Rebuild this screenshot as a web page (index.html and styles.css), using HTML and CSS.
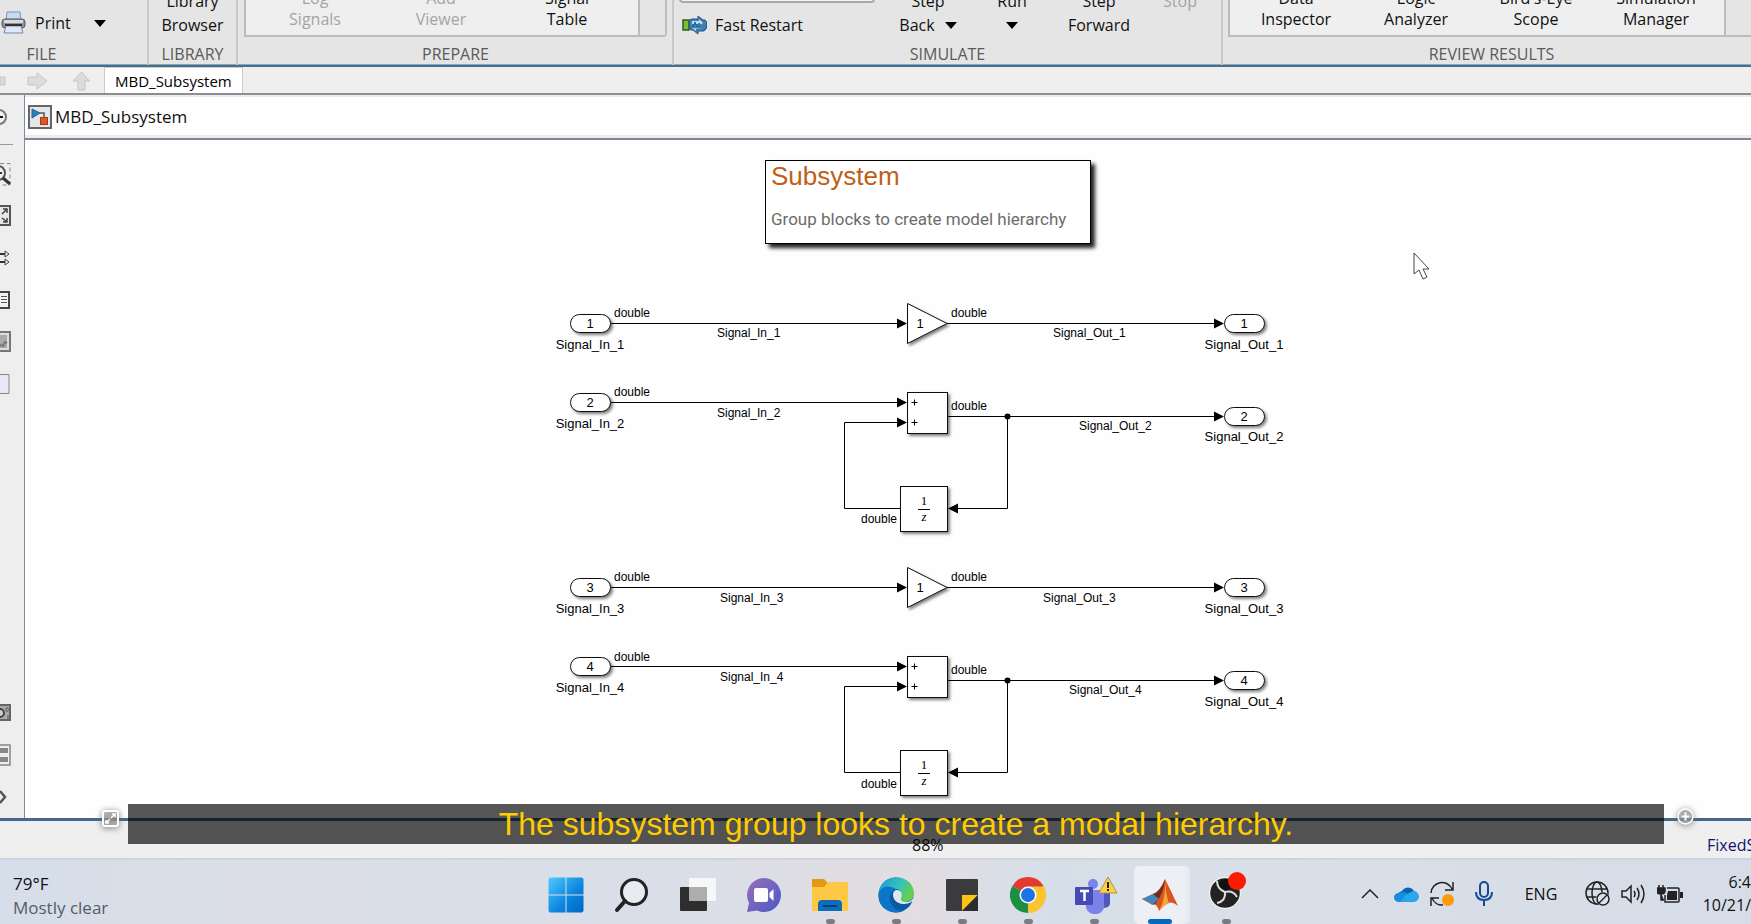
FILE: index.html
```html
<!DOCTYPE html>
<html lang="en">
<head>
<meta charset="utf-8">
<title>MBD_Subsystem</title>
<link rel="stylesheet" href="styles.css">
</head>
<body>
<div class="app">
  <header class="ribbon">
    <section class="section file">
      <div class="tools">
        <button class="tool inline print">
          <svg width="25" height="24" viewBox="0 0 25 24"><path d="M6 1h13l1 9H5z" fill="#c5dcf3" stroke="#7d93ad"/><rect x="1" y="8" width="23" height="9" rx="3" fill="#8f9399" stroke="#54575c"/><rect x="3" y="9" width="19" height="3" fill="#d8dade"/><path d="M5 15h15l2 7H3z" fill="#dbe9fa" stroke="#7288a8"/><path d="M4 14h17" stroke="#333" stroke-width="2"/></svg>
          <span>Print</span>
          <svg class="print-caret" width="12" height="7"><path d="M0 0h12L6 7z"/></svg>
        </button>
      </div>
      <h2>FILE</h2>
    </section>
    <section class="section library">
      <div class="tools"><button class="tool"><span>Library</span><span>Browser</span></button></div>
      <h2>LIBRARY</h2>
    </section>
    <section class="section prepare">
      <div class="gallery">
        <button class="tool" disabled><span>Log</span><span>Signals</span></button>
        <button class="tool" disabled><span>Add</span><span>Viewer</span></button>
        <button class="tool"><span>Signal</span><span>Table</span></button>
        <div class="more"></div>
      </div>
      <h2>PREPARE</h2>
    </section>
    <section class="section simulate">
      <div class="tools">
        <div class="restart">
          <input class="mode" aria-label="Simulation mode">
          <button class="tool inline">
            <svg width="25" height="20" viewBox="0 0 25 20"><rect x="1" y="5" width="6" height="10" fill="#79bf35" stroke="#2c5b23" stroke-width="1.5"/><path d="M9 4h7V1l5 4h2q2 1 2 5t-3 6h-6v3l-5-4H9q-2-2-2-6t2-5z" fill="#3e7fb5" stroke="#24567f"/><path d="M10 6h7V4l4 4-4 3V9h-7zM20 14h-6v2l-4-3" fill="#bcdcf3"/><path d="M11 12l2-5 2 5M17 12V8l2 3" fill="none" stroke="#24567f"/></svg>
            <span>Fast Restart</span>
          </button>
        </div>
        <button class="tool back"><span>Step</span><span>Back <svg width="12" height="7"><path d="M0 0h12L6 7z"/></svg></span></button>
        <button class="tool run"><span>Run</span><span><svg width="12" height="7"><path d="M0 0h12L6 7z"/></svg></span></button>
        <button class="tool forward"><span>Step</span><span>Forward</span></button>
        <button class="tool stop" disabled><span>Stop</span><span>&nbsp;</span></button>
      </div>
      <h2>SIMULATE</h2>
    </section>
    <section class="section review">
      <div class="gallery">
        <button class="tool"><span>Data</span><span>Inspector</span></button>
        <button class="tool"><span>Logic</span><span>Analyzer</span></button>
        <button class="tool"><span>Bird's-Eye</span><span>Scope</span></button>
        <button class="tool"><span>Simulation</span><span>Manager</span></button>
        <div class="more"></div>
      </div>
      <h2>REVIEW RESULTS</h2>
    </section>
  </header>

  <nav class="tabs">
    <button aria-label="Back"><svg width="6" height="18" viewBox="0 0 6 18"><path d="M0 5h5v8H0z" fill="#dadada" stroke="#c4c4c4"/></svg></button>
    <button aria-label="Forward" class="fwd"><svg width="22" height="18" viewBox="0 0 22 18"><path d="M1 5h9V1l10 8-10 8v-4H1z" fill="#dcdcdc" stroke="#c4c4c4"/></svg></button>
    <button aria-label="Up" class="up"><svg width="19" height="20" viewBox="0 0 19 20"><path d="M9.500 1l8 9H13v9H6v-9H1z" fill="#dcdcdc" stroke="#c4c4c4"/></svg></button>
    <button class="tab">MBD_Subsystem</button>
  </nav>

  <main class="work">
    <aside class="palette">
      <button class="first" aria-label="Hide"><svg width="12" height="18" viewBox="0 0 12 18"><circle cx="-1" cy="9" r="7" fill="#f4f4f4" stroke="#777" stroke-width="2"/><path d="M0 9h3" stroke="#111" stroke-width="2"/></svg></button>
      <hr>
      <button aria-label="Zoom"><svg width="12" height="24" viewBox="0 0 12 24"><path d="M0 1.500h10V23H0" fill="none" stroke="#888" stroke-dasharray="4 3"/><circle cx="-2" cy="11" r="7" fill="#eee" stroke="#555" stroke-width="2"/><path d="M0 11h2" stroke="#333" stroke-width="2"/><path d="M3 16l7 6" stroke="#333" stroke-width="3"/></svg></button>
      <button aria-label="Fit to view"><svg width="12" height="22" viewBox="0 0 12 22"><path d="M0 1h10v19H0" fill="#e6e6e6" stroke="#555" stroke-width="2"/><path d="M2 9l5-5M3 4h4v4M2 13l5 4M3 17h4v-4" fill="none" stroke="#444" stroke-width="1.500"/></svg></button>
      <button aria-label="Signals"><svg width="12" height="16" viewBox="0 0 12 16"><path d="M0 4h5M0 12h5" stroke="#333" stroke-width="2"/><path d="M5 1l4 3-4 3zM5 9l4 3-4 3z" fill="#eee" stroke="#444"/></svg></button>
      <button aria-label="Annotation"><svg width="12" height="18" viewBox="0 0 12 18"><path d="M0 1h9v16H0" fill="#f2f2f2" stroke="#444" stroke-width="2"/><path d="M1 5.500h6M1 8.500h6M1 11.500h6" stroke="#555"/></svg></button>
      <button aria-label="Image"><svg width="12" height="22" viewBox="0 0 12 22"><path d="M0 1h10v19H0" fill="#ddd" stroke="#777" stroke-width="2"/><path d="M0 4h7v13H0z" fill="#aaa"/><path d="M0 14l3 1 2-4 2 1" fill="none" stroke="#777" stroke-width="2"/></svg></button>
      <button aria-label="Area"><svg width="12" height="22" viewBox="0 0 12 22"><path d="M0 1.500h9v19H0" fill="#e6e8f8" stroke="#888"/></svg></button>
      <button class="camera" aria-label="Screenshot"><svg width="12" height="18" viewBox="0 0 12 18"><path d="M0 1h10v15H0" fill="#aaa" stroke="#666" stroke-width="2"/><circle cx="0" cy="9" r="4" fill="#ccc" stroke="#444" stroke-width="2"/><path d="M6 4h2v3H6zM8 11v4" fill="#eee" stroke="#555"/></svg></button>
      <button aria-label="Model browser"><svg width="12" height="22" viewBox="0 0 12 22"><path d="M0 1h10v20H0" fill="#eee" stroke="#888" stroke-width="1.500"/><path d="M0 4h8v5H0zM0 13h8v5H0z" fill="#888"/></svg></button>
      <button aria-label="Expand"><svg width="12" height="16" viewBox="0 0 12 16"><path d="M0 2l5 6-5 6" fill="none" stroke="#555" stroke-width="2.500"/></svg></button>
    </aside>

    <div class="editor">
      <div class="crumb">
        <svg width="24" height="24" viewBox="0 0 24 24"><rect x="1" y="1" width="22" height="22" fill="#e4e6ea" stroke="#666" stroke-width="2"/><path d="M4 4l8 4-8 5z" fill="#2f7fb8" stroke="#1d5f90"/><path d="M12 8h4v4" fill="none" stroke="#555" stroke-width="1.500"/><rect x="12.500" y="12.500" width="7" height="7" fill="#dd5826" stroke="#a83a10"/></svg>
        <a href="#">MBD_Subsystem</a>
      </div>
      <div class="canvas">
        <div class="note">
          <h1>Subsystem</h1>
          <p>Group blocks to create model hierarchy</p>
        </div>
        <svg class="diagram" width="856" height="532" viewBox="500 280 856 532">
          <defs>
            <filter id="shadow" x="-20%" y="-20%" width="150%" height="160%"><feDropShadow dx="2" dy="2" stdDeviation="1.500" flood-color="#000" flood-opacity=".5"/></filter>
          </defs>
          <g>
            <g class="wire"><path d="M611 323.500H898M947 323.500H1215M611 402.500H898M947 416.500H1215M1007.500 416.500V508.500H957M901 508.500H844.500V422.500H898"/></g>
            <path d="M897 318.500l10 5-10 5zM1214 318.500l10 5-10 5zM897 397.500l10 5-10 5zM897 417.500l10 5-10 5zM1214 411.500l10 5-10 5zM958 503.500l-10 5 10 5z"/>
            <circle cx="1007.500" cy="416.500" r="3"/>
            <g class="block">
              <rect x="570.500" y="314.500" width="40" height="18" rx="9"/>
              <path d="M907.500 303.500V343.500L947 323.500z"/>
              <rect x="1224.500" y="314.500" width="40" height="18" rx="9"/>
              <rect x="570.500" y="393.500" width="40" height="18" rx="9"/>
              <rect x="907.500" y="392.500" width="40" height="41"/>
              <rect x="1224.500" y="407.500" width="40" height="18" rx="9"/>
              <rect x="900.500" y="486.500" width="47" height="45"/>
            </g>
            <path class="wire" d="M911.500 402.500h6M914.500 399.500v6M911.500 422.500h6M914.500 419.500v6M918 509.500h12"/>
            <g class="fraction"><text x="924" y="505">1</text><text class="z" x="924" y="521">z</text></g>
            <g class="name">
              <text x="590" y="328">1</text><text x="590" y="349">Signal_In_1</text><text x="920" y="328">1</text><text x="1244" y="328">1</text><text x="1244" y="349">Signal_Out_1</text>
              <text x="590" y="407">2</text><text x="590" y="428">Signal_In_2</text><text x="1244" y="421">2</text><text x="1244" y="441">Signal_Out_2</text>
            </g>
            <g class="signal">
              <text x="614" y="317">double</text><text x="717" y="337">Signal_In_1</text><text x="951" y="317">double</text><text x="1053" y="337">Signal_Out_1</text>
              <text x="614" y="396">double</text><text x="717" y="417">Signal_In_2</text><text x="951" y="410">double</text><text x="1079" y="430">Signal_Out_2</text><text x="861" y="523">double</text>
            </g>
          </g>
          <g transform="translate(0 264)">
            <g class="wire"><path d="M611 323.500H898M947 323.500H1215M611 402.500H898M947 416.500H1215M1007.500 416.500V508.500H957M901 508.500H844.500V422.500H898"/></g>
            <path d="M897 318.500l10 5-10 5zM1214 318.500l10 5-10 5zM897 397.500l10 5-10 5zM897 417.500l10 5-10 5zM1214 411.500l10 5-10 5zM958 503.500l-10 5 10 5z"/>
            <circle cx="1007.500" cy="416.500" r="3"/>
            <g class="block">
              <rect x="570.500" y="314.500" width="40" height="18" rx="9"/>
              <path d="M907.500 303.500V343.500L947 323.500z"/>
              <rect x="1224.500" y="314.500" width="40" height="18" rx="9"/>
              <rect x="570.500" y="393.500" width="40" height="18" rx="9"/>
              <rect x="907.500" y="392.500" width="40" height="41"/>
              <rect x="1224.500" y="407.500" width="40" height="18" rx="9"/>
              <rect x="900.500" y="486.500" width="47" height="45"/>
            </g>
            <path class="wire" d="M911.500 402.500h6M914.500 399.500v6M911.500 422.500h6M914.500 419.500v6M918 509.500h12"/>
            <g class="fraction"><text x="924" y="505">1</text><text class="z" x="924" y="521">z</text></g>
            <g class="name">
              <text x="590" y="328">3</text><text x="590" y="349">Signal_In_3</text><text x="920" y="328">1</text><text x="1244" y="328">3</text><text x="1244" y="349">Signal_Out_3</text>
              <text x="590" y="407">4</text><text x="590" y="428">Signal_In_4</text><text x="1244" y="421">4</text><text x="1244" y="442">Signal_Out_4</text>
            </g>
            <g class="signal">
              <text x="614" y="317">double</text><text x="720" y="338">Signal_In_3</text><text x="951" y="317">double</text><text x="1043" y="338">Signal_Out_3</text>
              <text x="614" y="397">double</text><text x="720" y="417">Signal_In_4</text><text x="951" y="410">double</text><text x="1069" y="430">Signal_Out_4</text><text x="861" y="524">double</text>
            </g>
          </g>
        </svg>
      </div>
    </div>
  </main>

  <footer class="status"><span class="zoom">88%</span><span class="solver">FixedS</span></footer>

  <div class="taskbar">
    <button class="weather"><span>79°F</span><span class="sky">Mostly clear</span></button>
    <div class="apps">
      <button aria-label="Start"><svg width="36" height="36" viewBox="0 0 36 36"><defs><linearGradient id="win" x1="0" y1="0" x2="1" y2="1"><stop offset="0" stop-color="#4fcbff"/><stop offset=".6" stop-color="#0a84dc"/><stop offset="1" stop-color="#0067c8"/></linearGradient></defs><path d="M2 .5h15.500v17H.5V2zM18.500.5H34L35.500 2v15.500h-17zM.5 18.500h17v17H2L.5 34zM18.500 18.500h17V34L34 35.500H18.500z" fill="url(#win)"/></svg></button>
      <button aria-label="Search"><svg width="36" height="36" viewBox="0 0 36 36"><circle cx="20" cy="15" r="12.500" fill="#e8ecf2" stroke="#222" stroke-width="3"/><path d="M11 24L3 33" stroke="#222" stroke-width="4" stroke-linecap="round"/></svg></button>
      <button aria-label="Task view"><svg width="38" height="36" viewBox="0 0 38 36"><rect x="1" y="10" width="27" height="24" rx="1" fill="#2e2e2e"/><rect x="10" y="1" width="27" height="23" rx="1" fill="#fff" fill-opacity=".75"/><path d="M10 10h18v14H10z" fill="#999" fill-opacity=".6"/></svg></button>
      <button aria-label="Chat"><svg width="36" height="36" viewBox="0 0 36 36"><defs><linearGradient id="chat" x1="0" y1="0" x2="1" y2="1"><stop offset="0" stop-color="#9a6fb9"/><stop offset="1" stop-color="#4a57c8"/></linearGradient></defs><path d="M18 1a17 17 0 1 1-7 32.500L1 35l2-9A17 17 0 0 1 18 1z" fill="url(#chat)"/><rect x="8" y="11" width="14" height="14" rx="2" fill="#fff"/><path d="M23.500 16l4-4v12l-4-4z" fill="#fff"/></svg></button>
      <button class="open" aria-label="File Explorer"><svg width="38" height="36" viewBox="0 0 38 36"><path d="M1 3q0-1 1-1h11l3 3v6H1z" fill="#e19a12"/><path d="M1 10h12l4-5h19q1 0 1 1v27q0 1-1 1H2q-1 0-1-1z" fill="#fdc944"/><path d="M7 34V27q0-4 4-4h16q4 0 4 4v7z" fill="#0f6cb8"/><path d="M12 29h14" stroke="#083f79" stroke-width="2"/></svg></button>
      <button class="open" aria-label="Edge"><svg width="36" height="36" viewBox="0 0 36 36"><defs><linearGradient id="edge" x1="0" y1="0" x2="1" y2=".4"><stop offset="0" stop-color="#1997d4"/><stop offset=".6" stop-color="#35c1c0"/><stop offset="1" stop-color="#65cf50"/></linearGradient></defs><circle cx="18" cy="18" r="17.500" fill="#0c59a4"/><path d="M.5 17C2 5 10 .5 18 .5 29 .5 36 8 36 16c0 6-4 9-9 9-4 0-6-2-5-4 4-7-3-10-7-9C8 9 3 12 .5 17z" fill="url(#edge)"/><path d="M.5 18c1-7 7-10 13-8 3 1 4 2 5 3-8 1-9 12-2 18 2 2 5 3 8 2-3 2-6 3-9 2C6 34 0 27 .5 18z" fill="#0b75ca"/><path d="M19 13c-6 0-6 13 6 14 4 0 8-1 9-3l1 1 1-6c-1 4-4 6-8 6-4 0-6-2-5-4 2-4 0-8-4-8z" fill="#dfe6ee"/></svg></button>
      <button class="open" aria-label="Sticky Notes"><svg width="32" height="32" viewBox="0 0 32 32"><rect width="32" height="32" rx="1" fill="#3b3b3d"/><path d="M16 16h16L16 32z" fill="#fdc513"/><path d="M32 16v16H16z" fill="#2d2d2f"/></svg></button>
      <button class="open" aria-label="Chrome"><svg width="36" height="36" viewBox="0 0 36 36"><path d="M18 18L2.400 9A18 18 0 0 1 33.600 9z" fill="#e33b2e"/><path d="M18 18L33.600 9A18 18 0 0 1 18 36z" fill="#fcc42f"/><path d="M18 18v18A18 18 0 0 1 2.400 9z" fill="#1f8e45"/><path d="M18 9.500h15.800Q36 14 36 18 35 31 18 36l7.500-14z" fill="#fcc42f"/><circle cx="18" cy="18" r="8.500" fill="#fff"/><circle cx="18" cy="18" r="7" fill="#1c73e8"/></svg></button>
      <button class="open" aria-label="Teams"><svg width="48" height="38" viewBox="-2 0 48 38"><circle cx="21" cy="8" r="5" fill="#7b83eb"/><path d="M28 15h10v13q-1 4-7 4z" fill="#4f56bf"/><path d="M14 14h18v14a9 8 0 0 1-18 4z" fill="#7b83eb"/><rect x="3" y="11" width="18" height="18" rx="1" fill="#444bb5"/><path d="M8 15h9M12.500 15v10" stroke="#fff" stroke-width="2.500"/><path d="M36 1l9 16H27z" fill="#ffd23c" stroke="#a8925a" stroke-linejoin="round"/><path d="M36 6v6M36 13v2" stroke="#222" stroke-width="2"/></svg></button>
      <button class="open active" aria-label="MATLAB"><svg width="36" height="34" viewBox="0 0 36 34"><path d="M0 21l11-5q8-4 12-15 6 12 13 27-6-5-9-3-4 1-10 8-2-7-6-7-3 0-4-1z" fill="#d9541e"/><path d="M0 21l11-5 6 5-7 6-3-3z" fill="#3e87bd"/><path d="M11 16q7-1 12-15-1 13-9 24-2 2-4 2l7-6z" fill="#6b2c28"/><path d="M23 1q1 18 4 24-4 1-10 8 7-12 6-32z" fill="#f6a43b"/></svg></button>
      <button class="open" aria-label="OBS"><svg class="obs" width="40" height="40" viewBox="-2 0 40 40"><circle cx="17" cy="22" r="15.500" fill="#222" stroke="#eee" stroke-width="1.500"/><circle cx="17" cy="14" r="6" fill="#111"/><path d="M17 21q-8-3-8-11M17 21q8-2 12 5M17 21q1 9-8 11" fill="none" stroke="#ddd" stroke-width="2"/><circle cx="29" cy="10" r="9" fill="#ff1a00"/></svg></button>
    </div>
    <div class="tray">
      <button aria-label="Hidden icons"><svg width="18" height="12" viewBox="0 0 18 12"><path d="M1 10l8-8 8 8" fill="none" stroke="#222" stroke-width="1.500"/></svg></button>
      <button aria-label="OneDrive"><svg width="25" height="18" viewBox="0 0 25 18"><path d="M4 9a5 5 0 0 1 4-3A7 7 0 0 1 20 6l-4 6z" fill="#0b62b5"/><path d="M5 17A4 4 0 0 1 4 8l7-1 10 9z" fill="#1a8ce0"/><path d="M13 9l6-3a5 5 0 0 1 1 11H6q4-5 7-8z" fill="#28a8ea"/></svg></button>
      <button aria-label="Updates"><svg width="26" height="26" viewBox="0 0 26 26"><path d="M2 12A11 11 0 0 1 23 8M24 1v8h-8M14 24A11 11 0 0 1 3 17M2 25v-8h8" fill="none" stroke="#222" stroke-width="1.500"/><circle cx="19" cy="19" r="6" fill="#ff9a0d"/></svg></button>
      <button class="mic" aria-label="Microphone"><svg width="18" height="26" viewBox="0 0 18 26"><rect x="5" y="1" width="8" height="15" rx="4" fill="none" stroke="#134a94" stroke-width="2"/><path d="M1 11q0 8 8 8t8-8M9 19v6" fill="none" stroke="#134a94" stroke-width="2"/></svg></button>
      <button class="lang">ENG</button>
      <button aria-label="Network"><svg width="26" height="26" viewBox="0 0 26 26"><g fill="none" stroke="#222" stroke-width="1.500"><circle cx="12" cy="12" r="11"/><ellipse cx="12" cy="12" rx="5" ry="11"/><path d="M2 8h20M2 16h12"/></g><circle cx="18" cy="18" r="7" fill="#dbe1ea"/><g fill="none" stroke="#222" stroke-width="1.500"><circle cx="18" cy="18" r="6"/><path d="M14 22l8-8"/></g></svg></button>
      <button aria-label="Volume"><svg width="26" height="22" viewBox="0 0 26 22"><path d="M1 8h4l5-5v16l-5-5H1zM13 8q2 3 0 6M16 5q4 6 0 12M20 2q6 9 0 18" fill="none" stroke="#222" stroke-width="1.500"/></svg></button>
      <button aria-label="Battery"><svg width="26" height="20" viewBox="0 0 26 20"><path d="M2 1v4M6 1v4M0 4h8v3q0 3-4 3t-4-3zM4 9v7h3" fill="#222" stroke="#222" stroke-width="1.500"/><path d="M10 4h11q1 0 1 1v12q0 1-1 1H8V11" fill="none" stroke="#222" stroke-width="1.500"/><path d="M11 7h9v9H10v-5zM23 8h3v6h-3z" fill="#222"/></svg></button>
      <button class="clock"><span>6:4</span><span>10/21/</span></button>
    </div>
  </div>
</div>

<div class="caption">The subsystem group looks to create a modal hierarchy.</div>
<button class="handle expand" aria-label="Expand captions"><svg width="17" height="17" viewBox="0 0 17 17"><rect x="1" y="1" width="15" height="15" rx="2" fill="#aaa" fill-opacity=".5" stroke="#fff" stroke-width="2"/><path d="M10 4h3v3M13 4l-4 4M4 10v3h3M4 13l4-4" fill="none" stroke="#fff" stroke-width="1.500"/></svg></button>
<button class="handle add" aria-label="Add"><svg width="17" height="17" viewBox="0 0 17 17"><circle cx="8.500" cy="8.500" r="7.500" fill="#aaa" fill-opacity=".5" stroke="#fff" stroke-width="1.500"/><path d="M8.500 4.500v8M4.500 8.500h8" stroke="#fff" stroke-width="2"/></svg></button>
<svg class="cursor" width="20" height="30" viewBox="0 0 20 30"><path d="M1 1v21l5-4 4 9 4-2-4-8h6z" fill="#fff" stroke="#444"/></svg>
</body>
</html>
```
FILE: styles.css
```css
* { box-sizing: border-box; }
body {
  margin: 0;
  font-family: "Open Sans", "Noto Sans", sans-serif;
  font-size: 16px;
  color: #111;
  overflow: hidden;
}
button {
  border: 0;
  padding: 0;
  background: none;
  font: inherit;
  color: inherit;
  display: flex;
  align-items: center;
  justify-content: center;
}
button svg { flex: none; display: block; }
.app { height: 100vh; display: flex; flex-direction: column; }

/* Ribbon */
.ribbon {
  flex: none;
  height: 67px;
  display: flex;
  background: #e5e5e5;
  border-bottom: 2px solid #4a6d8c;
  box-shadow: inset 0 -1px #86a9c0;
  overflow: hidden;
}
.section {
  display: flex;
  flex-direction: column;
  justify-content: flex-end;
  border-right: 2px solid #c8c8c8;
  flex: none;
}
.section h2 {
  margin: 0;
  padding-bottom: 1px;
  font-size: 16px;
  line-height: 20px;
  font-weight: 400;
  text-align: center;
  color: #5a5a5a;
}
.tools { display: flex; justify-content: center; align-items: flex-end; padding-bottom: 7px; }
.tool { flex-direction: column; line-height: 24px; white-space: nowrap; }
.tool span { display: flex; align-items: center; gap: 10px; }
.tool:disabled { color: #a4a4a4; }
.tool.inline { flex-direction: row; gap: 9px; }
.file { width: 213px; margin-left: -64px; }
.file .tools { justify-content: flex-start; padding: 0 0 9px 65px; }
.print-caret { margin-left: 14px; }
.library { width: 89px; }
.prepare { width: 436px; padding: 0 5px 0 6px; }
.simulate { width: 549px; }
.simulate .tools { justify-content: flex-start; padding-left: 5px; }
.restart { width: 196px; display: flex; flex-direction: column; align-items: flex-start; gap: 10px; }
.restart .tool { padding-left: 3px; gap: 8px; }
.mode { width: 100%; height: 24px; border: 2px solid #a9a9a9; border-radius: 4px; background: #f3f3f3; }
.back { width: 106px; }
.run { width: 62px; }
.run span { min-height: 24px; }
.forward { width: 112px; }
.stop { width: 50px; }
.review { flex: 1 0 auto; margin-right: -8px; padding-left: 5px; border: 0; }
.review h2 { padding-right: 4px; }
.gallery {
  display: flex;
  margin-bottom: 7px;
  padding-left: 6px;
  border: 2px solid #bcbcbc;
  border-radius: 0 0 4px 0;
  background: #efefef;
}
.gallery .tool { flex: 0 0 126px; line-height: 21px; padding-bottom: 5px; }
.review .gallery .tool { flex-basis: 120px; }
.more { flex: 1; margin-left: 8px; border-left: 2px solid #bcbcbc; background: #e5e5e5; }

/* Tabs */
.tabs {
  flex: none;
  height: 28px;
  display: flex;
  align-items: stretch;
  background: #efefef;
  border-bottom: 2px solid #918c94;
}
.tabs svg { margin-top: 2px; }
.fwd { margin-left: 21px; }
.up { margin-left: 23px; }
.tab {
  margin-left: 13px;
  padding: 0 10px;
  background: #fff;
  border: solid #ccc;
  border-width: 1px 1px 0;
  font-size: 15px;
  color: #000;
}

/* Work area */
.work { flex: 1; min-height: 0; display: flex; border-bottom: 3px solid #41698b; }
.palette { width: 25px; flex: none; display: flex; flex-direction: column; background: #eee; border-right: 1px solid #8189a0; }
.palette button { height: 42px; justify-content: flex-start; }
.palette .first { height: 44px; }
.palette hr { width: 13px; height: 1px; margin: 5px 0 8px; border: 0; background: #999; }
.palette .camera { margin-top: auto; }
.editor { flex: 1; min-width: 0; display: flex; flex-direction: column; background: #fefefe; }
.crumb {
  flex: none;
  height: 45px;
  display: flex;
  align-items: center;
  gap: 3px;
  padding-left: 3px;
  border-bottom: 2px solid #7d8597;
  box-shadow: inset 0 2px #ececec, inset 0 -3px #ececec;
  font-size: 17px;
}
.crumb a { color: #111; text-decoration: none; }
.canvas {
  flex: 1;
  min-height: 0;
  display: flex;
  flex-direction: column;
  align-items: center;
  gap: 36px;
  padding: 20px 0 0 80px;
  overflow: hidden;
}
.note {
  flex: none;
  width: 326px;
  height: 84px;
  padding: 0 5px;
  border: 1px solid #000;
  background: #fff;
  box-shadow: 4px 4px 4px #222;
}
.note h1 {
  margin: 0;
  font: 400 26px/30px "Liberation Sans", Arial, sans-serif;
  color: #bf5f16;
}
.note p {
  margin: 16px 0 0;
  font: 400 17px/24px Roboto, sans-serif;
  color: #6c6c6c;
  white-space: nowrap;
}
.diagram { flex: none; font-family: "Liberation Sans", Arial, sans-serif; }
.wire { fill: none; stroke: #000; }
.block { fill: #fff; stroke: #111; filter: url(#shadow); }
.name { font-size: 13px; text-anchor: middle; }
.signal { font-size: 12px; }
.fraction { font: 13px "Liberation Serif", serif; text-anchor: middle; }
.z { font-style: italic; }

/* Status bar */
.status { flex: none; height: 37px; display: flex; align-items: flex-end; background: #efefef; overflow: hidden; white-space: nowrap; line-height: 24px; }
.zoom { flex: 1; padding-left: 912px; }
.solver { flex: 0 0 44px; min-width: 0; overflow: hidden; color: #12126e; }
.status span { padding-bottom: 1px; }

/* Taskbar */
.taskbar {
  flex: none;
  height: 66px;
  display: flex;
  border-top: 2px solid #cdd2dc;
  background: linear-gradient(90deg, #d5deea 0, #dcdfe7 14%, #d9dee8 38%, #e2dde1 52%, #d6dfe9 60%, #dadfe8 72%, #d6dde8 100%);
  overflow: hidden;
}
.weather { flex: 0 0 533px; flex-direction: column; align-items: flex-start; padding: 7px 0 0 13px; font-size: 17px; line-height: 24px; }
.sky { color: #555c66; }
.apps { display: flex; flex: none; }
.apps button { width: 66px; flex-direction: column; position: relative; padding-top: 6px; }
.apps .open::after {
  content: "";
  position: absolute;
  bottom: 0;
  width: 9px;
  height: 5px;
  border-radius: 3px;
  background: #7c7c80;
}
.apps .active { width: 52px; margin: 6px 7px 0; padding: 0; border-radius: 5px; background: #ecf0f5; box-shadow: 4px 0 #e6eaf1; }
.apps .active::after { width: 24px; background: #0568c0; }
.obs { margin-top: -8px; }
.tray { margin-left: auto; display: flex; align-items: center; padding-top: 4px; }
.tray button { width: 36px; height: 40px; flex: none; }
.tray .mic { width: 48px; }
.tray .lang { width: 50px; margin: 0 14px 0 8px; }
.tray .clock { width: 61px; height: 48px; flex-direction: column; align-items: flex-end; line-height: 23px; margin-left: 2px; }

/* Overlays */
.caption {
  position: absolute;
  left: 128px;
  right: 87px;
  bottom: 80px;
  height: 40px;
  font: 400 32px/40px "Liberation Sans", Arial, sans-serif;
  text-align: center;
  color: #fc0;
  background: rgba(0, 0, 0, .66);
}
.handle { position: absolute; filter: drop-shadow(0 1px 3px #666); }
.expand { left: 102px; bottom: 97px; }
.add { right: 57px; bottom: 99px; }
.cursor { position: absolute; left: 1413px; top: 252px; }
```
